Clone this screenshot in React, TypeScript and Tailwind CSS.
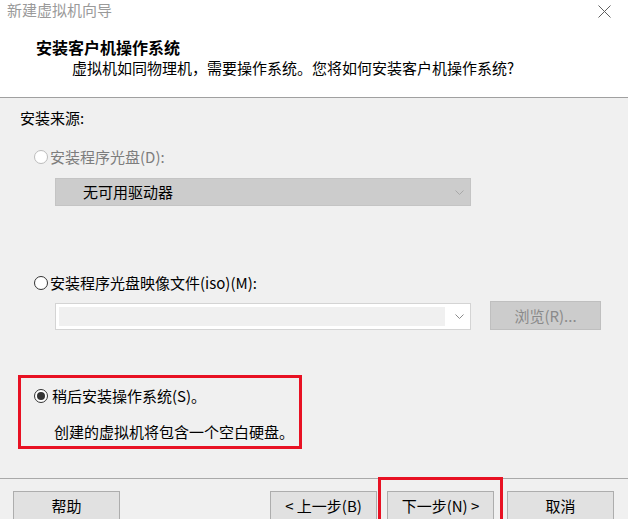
import React from "react";

const font = { fontFamily: '"Noto Sans CJK SC", "Noto Sans", sans-serif' };

function Radio({ checked, disabled }: { checked?: boolean; disabled?: boolean }) {
  return (
    <span
      className={
        "flex h-[14px] w-[14px] shrink-0 items-center justify-center rounded-full border bg-white " +
        (disabled ? "border-[#bcbcbc]" : "border-[#333333]")
      }
    >
      {checked && <span className="block h-[8px] w-[8px] rounded-full bg-[#333333]" />}
    </span>
  );
}

function Chevron({ color }: { color: string }) {
  return (
    <svg width="9" height="5" viewBox="0 0 9 5" className="shrink-0">
      <path d="M0.5 0.5 L4.5 4.5 L8.5 0.5" fill="none" stroke={color} strokeWidth="1" />
    </svg>
  );
}

function Button({ children }: { children: React.ReactNode }) {
  return (
    <button className="flex h-[30px] w-[107px] items-center justify-center border border-[#adadad] bg-[#e1e1e1] text-[15px] leading-[20px] text-black">
      {children}
    </button>
  );
}

export default function App() {
  return (
    <div className="relative h-[519px] w-[628px] overflow-hidden bg-white text-[15px] text-black" style={font}>
      {/* header */}
      <div className="h-[97px] bg-white">
        <div className="flex h-[20px] items-center justify-between pl-[7px] pr-[17px]">
          <span className="leading-[20px] text-[#9a9a9a]">新建虚拟机向导</span>
          <svg width="13" height="13" viewBox="0 0 13 13" className="mt-[2px]">
            <path d="M0.5 0.5 L12.5 12.5 M12.5 0.5 L0.5 12.5" stroke="#5f5f5f" strokeWidth="1" />
          </svg>
        </div>
        <div className="mt-[17px] h-[20px] pl-[36px] text-[16px] font-bold leading-[20px]">安装客户机操作系统</div>
        <div className="mt-[1px] h-[20px] pl-[72px] leading-[20px]">
          虚拟机如同物理机，需要操作系统。您将如何安装客户机操作系统?
        </div>
      </div>
      <div className="h-px bg-[#a0a0a0]" />

      {/* body */}
      <div className="flex h-[380px] flex-col bg-[#f0f0f0]">
        <div className="mt-[10px] h-[20px] pl-[20px] leading-[20px]">安装来源:</div>

        <div className="mt-[19px] flex h-[20px] items-center pl-[34px]">
          <Radio disabled />
          <span className="ml-[2px] leading-[20px] text-[#7d7d7d]">安装程序光盘(D):</span>
        </div>

        <div className="ml-[55px] mt-[11px] flex h-[28px] w-[416px] items-center border border-[#c4c4c4] bg-[#cccccc] pl-[27px] pr-[6px]">
          <span className="flex-1 leading-[20px]">无可用驱动器</span>
          <Chevron color="#a8a8a8" />
        </div>

        <div className="mt-[67px] flex h-[20px] items-center pl-[34px]">
          <Radio />
          <span className="ml-[2px] leading-[20px]">安装程序光盘映像文件(iso)(M):</span>
        </div>

        <div className="mt-[8px] flex items-start pl-[55px]">
          <div className="mt-[2px] flex h-[27px] w-[416px] items-center border border-[#d4d4d4] bg-white p-[3px] pr-[6px]">
            <div className="h-full flex-1 bg-[#f0f0f0]" />
            <span className="ml-[10px]">
              <Chevron color="#8a8a8a" />
            </span>
          </div>
          <div className="ml-[19px] flex h-[29px] w-[111px] items-center justify-center border border-[#bfbfbf] bg-[#cccccc] leading-[20px] text-[#8a8a8a]">
            浏览(R)...
          </div>
        </div>

        <div className="ml-[18px] mt-[45px] h-[74px] w-[284px] border-[3px] border-[#e81123]">
          <div className="mt-[8px] flex h-[20px] items-center pl-[13px]">
            <Radio checked />
            <span className="ml-[4px] leading-[20px]">稍后安装操作系统(S)。</span>
          </div>
          <div className="mt-[16px] h-[20px] pl-[33px] leading-[20px]">创建的虚拟机将包含一个空白硬盘。</div>
        </div>
      </div>
      <div className="h-px bg-[#a9a9a9]" />

      {/* footer */}
      <div className="flex h-[40px] bg-[#f0f0f0] pl-[13px] pt-[12px]">
        <Button>帮助</Button>
        <div className="ml-[150px]">
          <Button>&lt; 上一步(B)</Button>
        </div>
        <div className="ml-[10px]">
          <Button>下一步(N) &gt;</Button>
        </div>
        <div className="ml-[13px]">
          <Button>取消</Button>
        </div>
      </div>

      {/* annotation */}
      <div className="absolute left-[378px] top-[477px] h-[60px] w-[125px] border-[3px] border-[#e81123]" />
    </div>
  );
}
